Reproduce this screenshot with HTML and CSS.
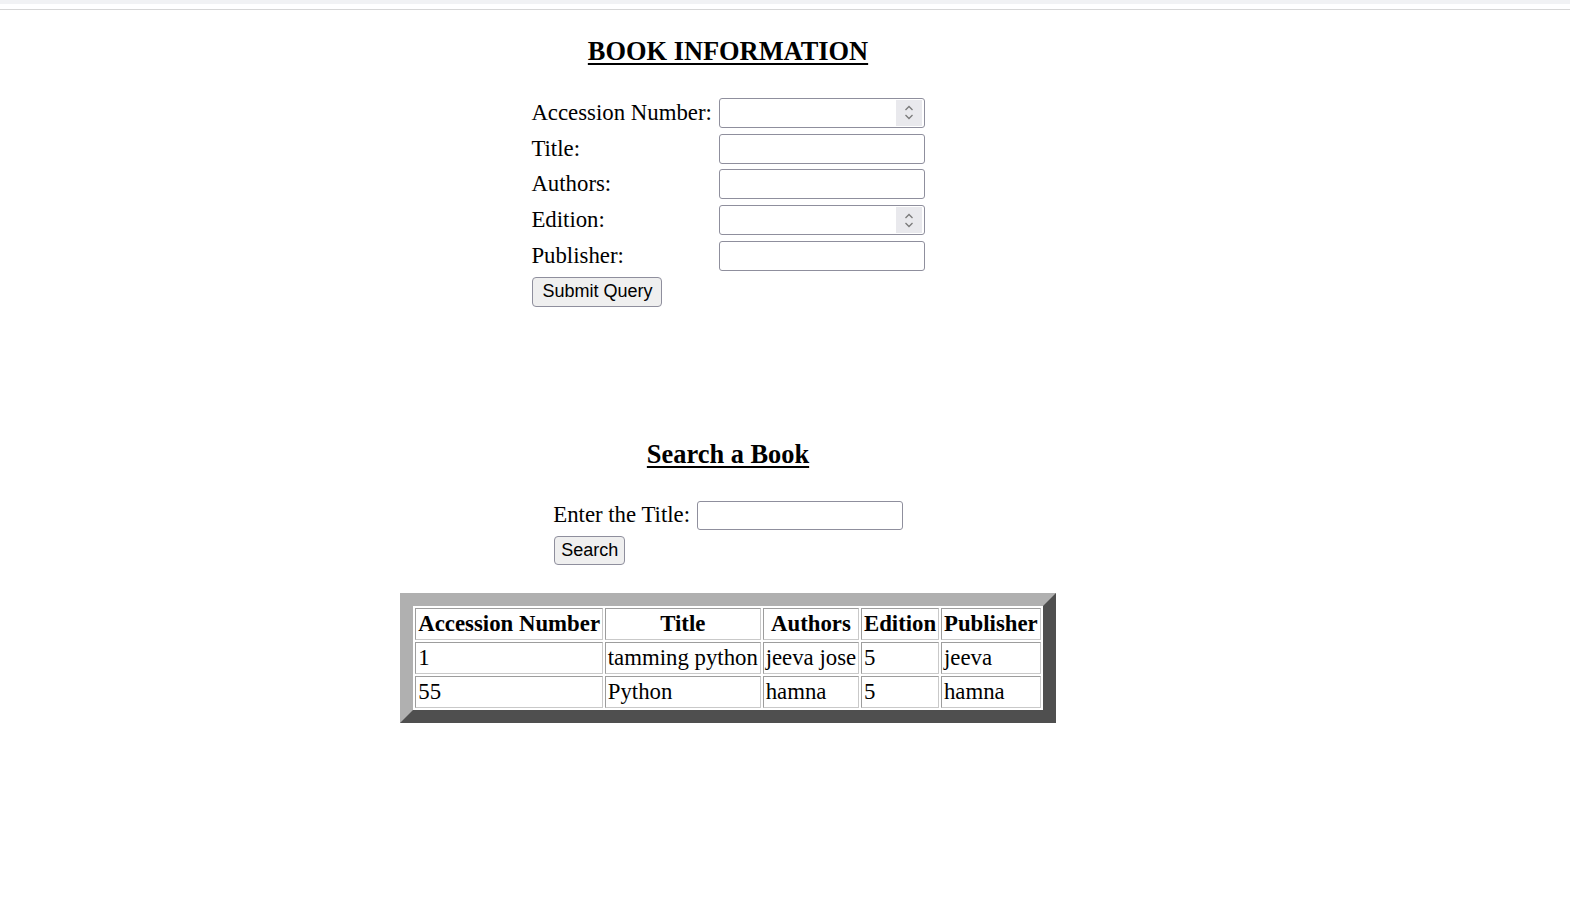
FILE: index.html
```html
<!DOCTYPE html>
<html lang="en">
<head>
<meta charset="utf-8">
<title>Book Information</title>
<link rel="stylesheet" href="styles.css">
</head>
<body>
<div class="topbar"></div>
<div class="topline"></div>
<main class="page">
  <h3 class="heading">BOOK INFORMATION</h3>
  <form class="form">
    <table class="form-table">
      <tr>
        <td class="label">Accession Number:</td>
        <td>
          <div class="field num-field">
            <input class="field-input" type="text">
            <span class="spinner">
              <svg width="10" height="6" viewBox="0 0 10 6"><path d="M1.5 5 L5 1.5 L8.5 5" fill="none" stroke="#7a7a7a" stroke-width="1.3"/></svg>
              <svg width="10" height="6" viewBox="0 0 10 6"><path d="M1.5 1 L5 4.5 L8.5 1" fill="none" stroke="#7a7a7a" stroke-width="1.3"/></svg>
            </span>
          </div>
        </td>
      </tr>
      <tr>
        <td class="label">Title:</td>
        <td><input class="field text-field" type="text"></td>
      </tr>
      <tr>
        <td class="label">Authors:</td>
        <td><input class="field text-field" type="text"></td>
      </tr>
      <tr>
        <td class="label">Edition:</td>
        <td>
          <div class="field num-field">
            <input class="field-input" type="text">
            <span class="spinner">
              <svg width="10" height="6" viewBox="0 0 10 6"><path d="M1.5 5 L5 1.5 L8.5 5" fill="none" stroke="#7a7a7a" stroke-width="1.3"/></svg>
              <svg width="10" height="6" viewBox="0 0 10 6"><path d="M1.5 1 L5 4.5 L8.5 1" fill="none" stroke="#7a7a7a" stroke-width="1.3"/></svg>
            </span>
          </div>
        </td>
      </tr>
      <tr>
        <td class="label">Publisher:</td>
        <td><input class="field text-field" type="text"></td>
      </tr>
      <tr>
        <td><button class="btn btn-submit" type="button">Submit Query</button></td>
        <td></td>
      </tr>
    </table>
  </form>

  <h3 class="heading heading-search">Search a Book</h3>
  <form class="form">
    <table class="form-table search-table">
      <tr>
        <td class="label">Enter the Title:</td>
        <td><input class="field text-field" type="text"></td>
      </tr>
      <tr>
        <td class="btn-cell"><button class="btn btn-search" type="button">Search</button></td>
        <td></td>
      </tr>
    </table>
  </form>

  <table class="results">
    <tr>
      <th>Accession Number</th>
      <th>Title</th>
      <th>Authors</th>
      <th>Edition</th>
      <th>Publisher</th>
    </tr>
    <tr>
      <td>1</td>
      <td>tamming python</td>
      <td>jeeva jose</td>
      <td>5</td>
      <td>jeeva</td>
    </tr>
    <tr>
      <td>55</td>
      <td>Python</td>
      <td>hamna</td>
      <td>5</td>
      <td>hamna</td>
    </tr>
  </table>
</main>
</body>
</html>
```

FILE: styles.css
```css
html, body {
  margin: 0;
  padding: 0;
  background: #ffffff;
}

body {
  font-family: "Liberation Serif", "Times New Roman", serif;
  font-size: 22.8px;
  color: #000000;
}

.topbar {
  height: 4px;
  background: #f1f2f4;
}

.topline {
  height: 1px;
  margin-top: 5px;
  background: #d6d6d6;
}

.page {
  width: 1456px;
  display: flex;
  flex-direction: column;
  align-items: center;
}

.heading {
  margin: 26px 0 28px;
  font-size: 26.4px;
  line-height: 30px;
  font-weight: bold;
  text-decoration: underline;
  text-decoration-thickness: 2px;
  text-underline-offset: 3px;
  text-align: center;
}

.heading-search {
  margin-top: 128px;
}

.form {
  margin: 0;
}

.form-table {
  border-collapse: separate;
  border-spacing: 3px 2px;
}

.form-table td {
  padding: 1.9px;
  vertical-align: middle;
  white-space: nowrap;
}

.label {
  line-height: 26px;
}

.field {
  box-sizing: border-box;
  width: 206px;
  height: 30px;
  border: 1px solid #8f8f9d;
  border-radius: 3px;
  background: #ffffff;
  margin: 0;
  display: block;
}

.text-field {
  padding: 1px 3px;
  font-size: 18px;
}

.num-field {
  display: flex;
  align-items: stretch;
  padding: 1px 2px 1px 0;
}

.field-input {
  flex: 1;
  min-width: 0;
  border: none;
  outline: none;
  background: transparent;
  padding: 0 3px;
  font-size: 18px;
}

.spinner {
  width: 26px;
  background: #e9e9ed;
  display: flex;
  flex-direction: column;
  align-items: center;
  justify-content: center;
  gap: 3px;
}

.spinner svg {
  display: block;
}

.btn {
  box-sizing: border-box;
  height: 30px;
  padding: 1.4px 9px;
  margin: 0;
  font-family: "Liberation Sans", Arial, sans-serif;
  font-size: 18px;
  color: #000000;
  background: #efefef;
  border: 1px solid #8f8f9d;
  border-radius: 4px;
  display: block;
}

.btn-submit {
  margin-left: 1px;
}

.search-table tr:first-child .field {
  height: 29px;
}

.search-table .btn-cell {
  padding-top: 2.8px;
}

.btn-search {
  height: 29px;
  padding: 1px 6px;
  margin-left: 1px;
}

.results {
  margin-top: 23.8px;
  border-collapse: separate;
  border-spacing: 2px;
  border-style: solid;
  border-width: 13px;
  border-color: #b0b0b0 #4f4f4f #4f4f4f #b0b0b0;
}

.results th,
.results td {
  padding: 1.9px;
  line-height: 26.2px;
  border-style: solid;
  border-width: 1px;
  border-color: #9d9d9d #c9c9c9 #c9c9c9 #9d9d9d;
  white-space: nowrap;
}

.results th {
  font-weight: bold;
  text-align: center;
}

.results td {
  text-align: left;
}
```
